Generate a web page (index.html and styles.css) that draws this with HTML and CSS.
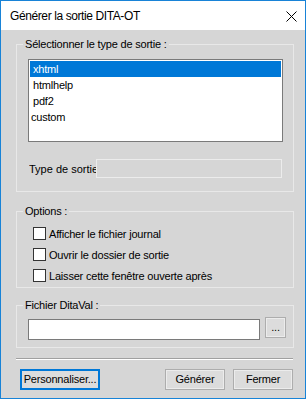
FILE: index.html
```html
<!DOCTYPE html>
<html lang="fr">
<head>
    <meta charset="UTF-8">
    <meta name="viewport" content="width=device-width, initial-scale=1.0">
    <title>Générer la sortie DITA-OT</title>
    <link rel="stylesheet" href="styles.css">
</head>
<body>
    <div class="window">
        <div class="titlebar">
            <span class="title">Générer la sortie DITA-OT</span>
            <svg class="close" width="11" height="11" viewBox="0 0 11 11">
                <path d="M0.5 0.5L10.5 10.5M10.5 0.5L0.5 10.5" stroke="#000" stroke-width="1" fill="none"/>
            </svg>
        </div>

        <div class="content">
            <div class="group group-type">
                <span class="group-label">Sélectionner le type de sortie :</span>
                <ul class="listbox">
                    <li class="item indent selected">xhtml</li>
                    <li class="item indent">htmlhelp</li>
                    <li class="item indent">pdf2</li>
                    <li class="item">custom</li>
                </ul>
                <div class="type-row">
                    <span class="type-label">Type de sortie</span>
                    <div class="field disabled"></div>
                </div>
            </div>

            <div class="group group-options">
                <span class="group-label">Options :</span>
                <div class="options">
                    <label class="check"><span class="box"></span>Afficher le fichier journal</label>
                    <label class="check"><span class="box"></span>Ouvrir le dossier de sortie</label>
                    <label class="check"><span class="box"></span>Laisser cette fenêtre ouverte après</label>
                </div>
            </div>

            <div class="group group-ditaval">
                <span class="group-label">Fichier DitaVal :</span>
                <div class="file-row">
                    <div class="field file-input"></div>
                    <button class="btn btn-browse">...</button>
                </div>
            </div>

            <div class="separator"></div>

            <div class="footer">
                <button class="btn btn-custom">Personnaliser...</button>
                <div class="footer-right">
                    <button class="btn btn-action">Générer</button>
                    <button class="btn btn-action">Fermer</button>
                </div>
            </div>
        </div>
    </div>
</body>
</html>
```

FILE: styles.css
```css
* {
    box-sizing: border-box;
}
body {
    margin: 0;
    background: #ffffff;
    font-family: "Liberation Sans", Arial, sans-serif;
    font-size: 11px;
    letter-spacing: -0.2px;
    color: #000;
}
.window {
    width: 306px;
    height: 399px;
    border: 1px solid #1883d7;
    background: #d6d6d6;
}
.titlebar {
    height: 29px;
    background: #fff;
    display: flex;
    align-items: center;
    justify-content: space-between;
    padding: 1px 8px 0 9px;
}
.title {
    font-size: 12px;
    letter-spacing: -0.4px;
}
.close {
    display: block;
}
.content {
    padding: 0 11px 0 15px;
}
.group {
    border: 1px solid #e8e8e8;
}
.group-label {
    display: block;
    width: fit-content;
    margin: -7px 0 0 6px;
    padding: 0 2px;
    line-height: 13px;
    background: #d6d6d6;
    white-space: nowrap;
}
.group-type {
    margin-top: 14px;
    padding-bottom: 13px;
}
.listbox {
    list-style: none;
    margin: 8px 0 0 11px;
    padding: 1px;
    width: 255px;
    height: 83px;
    border: 1px solid #7a7a7a;
    background: #fff;
}
.item {
    height: 16px;
    line-height: 16px;
    padding-left: 1px;
}
.item.indent {
    padding-left: 3px;
}
.item.selected {
    background: #0078d7;
    color: #fff;
}
.type-row {
    display: flex;
    align-items: center;
    margin: 17px 0 0 12px;
}
.type-label {
    width: 67px;
    overflow: hidden;
    white-space: nowrap;
    letter-spacing: 0;
}
.field {
    height: 19px;
    border: 1px solid #7a7a7a;
    background: #fff;
}
.field.disabled {
    width: 186px;
    border-color: #ececec;
    background: #d6d6d6;
}
.group-options {
    margin-top: 19px;
    padding-bottom: 1px;
}
.options {
    margin-top: 5px;
}
.check {
    display: flex;
    align-items: center;
    height: 21px;
    padding-left: 16px;
}
.box {
    width: 13px;
    height: 13px;
    border: 1px solid #333;
    background: #fff;
    margin-right: 3px;
}
.group-ditaval {
    margin-top: 17px;
    padding-bottom: 7px;
}
.file-row {
    display: flex;
    align-items: flex-start;
    margin: 5px 0 0 11px;
}
.file-input {
    width: 232px;
    height: 21px;
    margin-top: 2px;
}
.btn {
    font-family: inherit;
    font-size: 11px;
    letter-spacing: -0.2px;
    color: #000;
    background: #dcdcdc;
    border: 1px solid #adadad;
    box-shadow: inset 0 0 0 1px #ececec;
    padding: 0;
    height: 21px;
    line-height: 17px;
}
.btn-browse {
    width: 21px;
    margin-left: 5px;
}
.separator {
    margin: 10px 1px 0 0;
    border-top: 1px solid #a0a0a0;
    border-bottom: 1px solid #fff;
}
.footer {
    display: flex;
    justify-content: space-between;
    margin: 9px 1px 0 4px;
}
.btn-custom {
    width: 80px;
    border: 2px solid #0078d7;
    box-shadow: none;
}
.footer-right {
    display: flex;
    gap: 8px;
}
.btn-action {
    width: 60px;
}
```
